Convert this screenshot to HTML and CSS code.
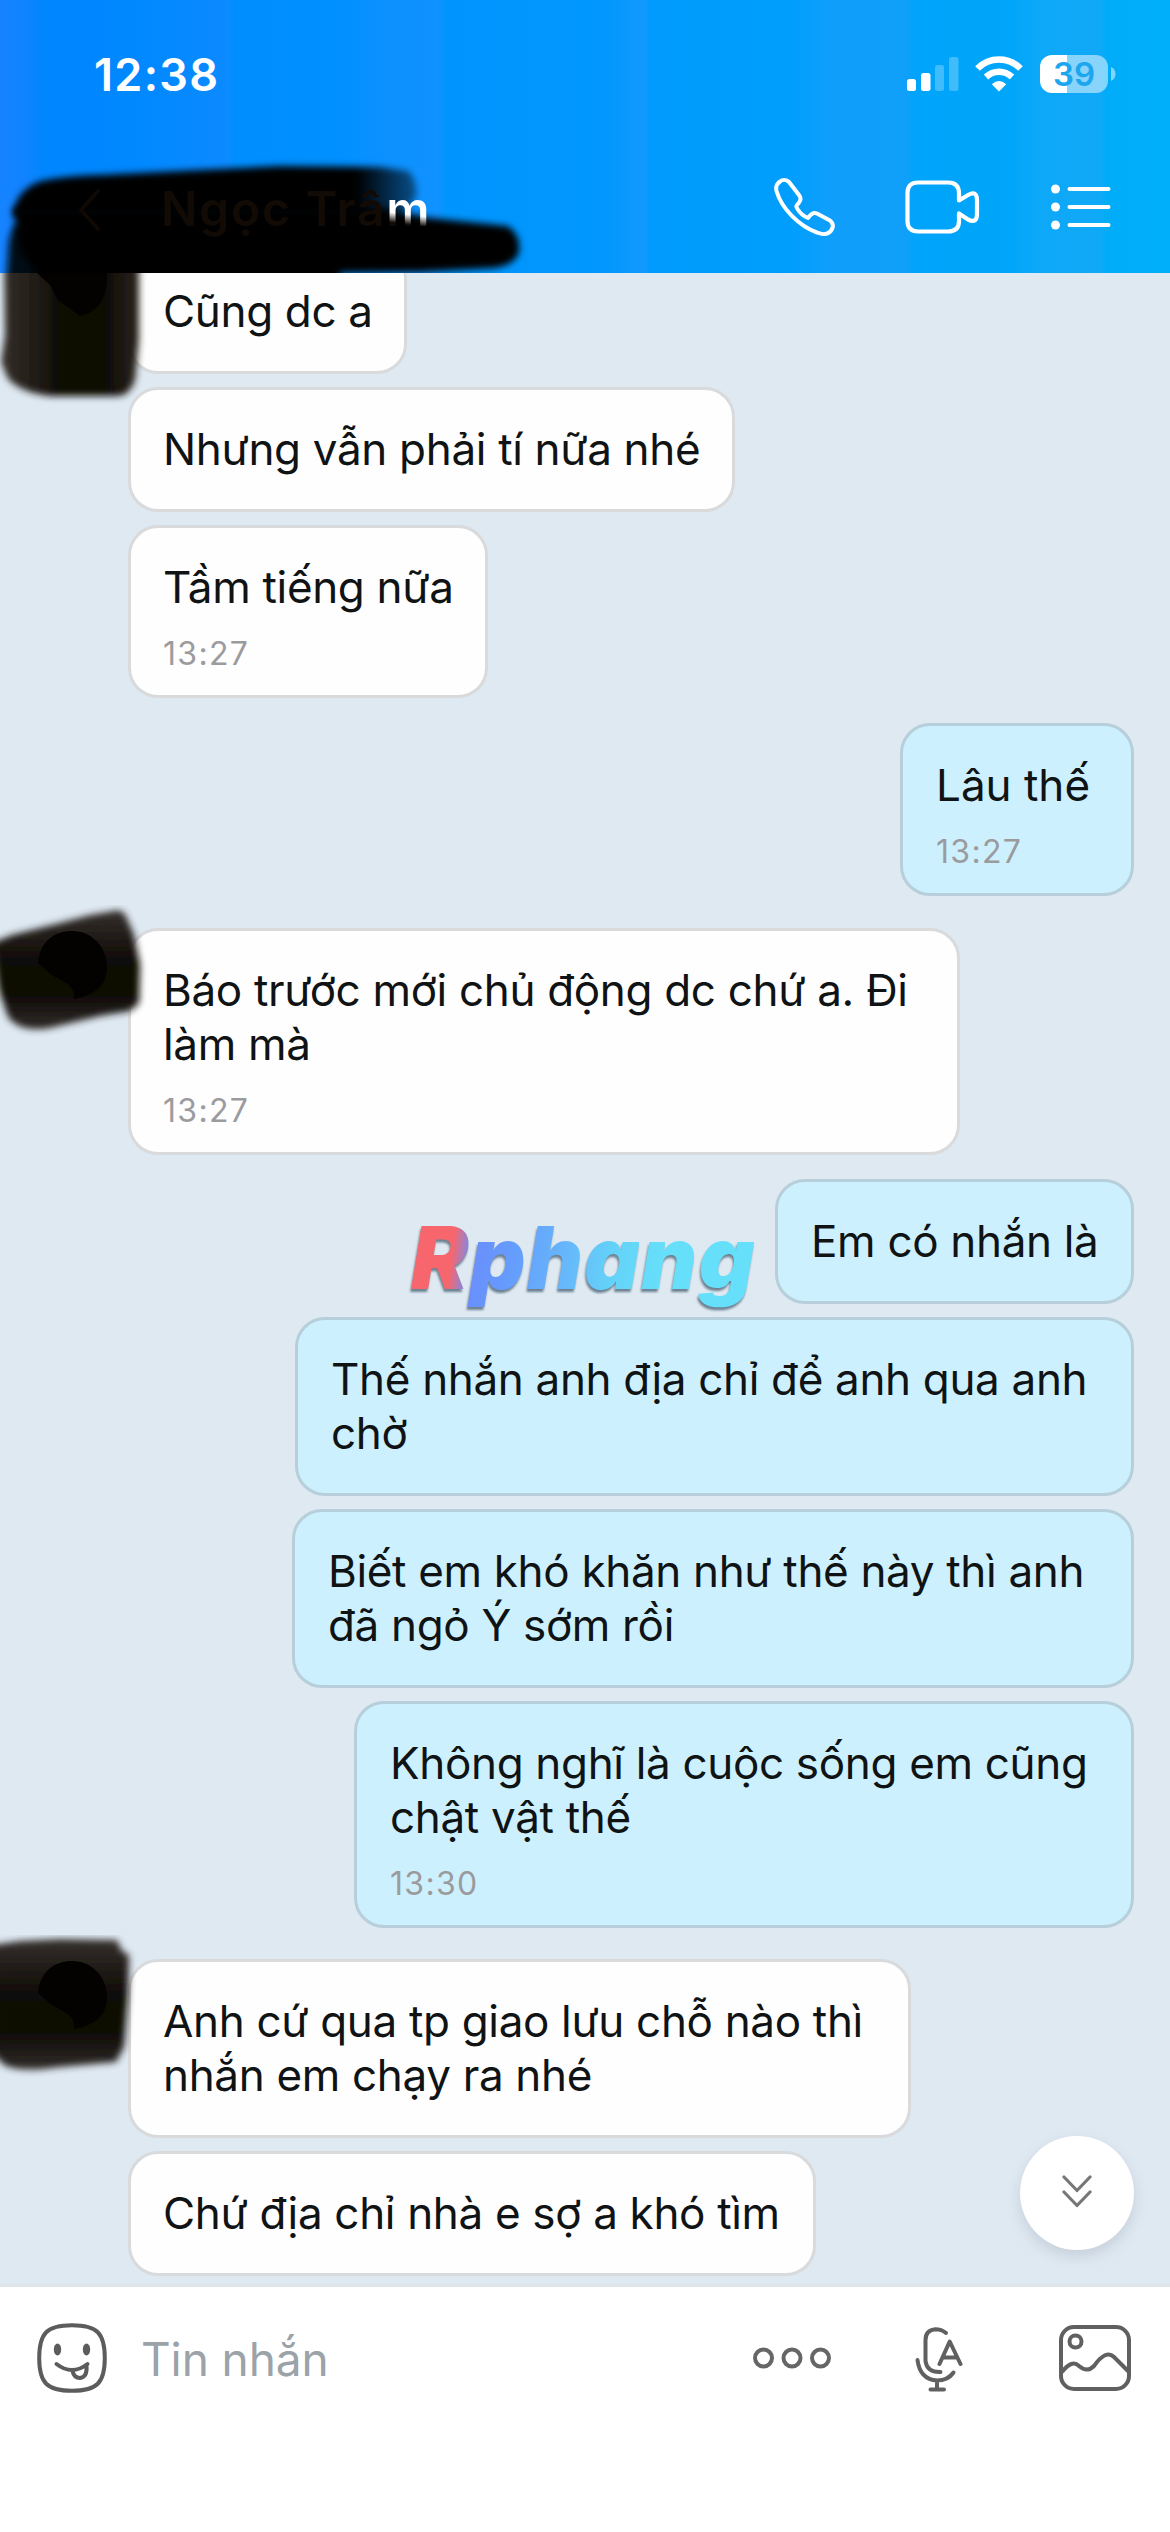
FILE: index.html
```
<!DOCTYPE html>
<html lang="vi">
<head>
<meta charset="utf-8">
<title>Tin nhắn</title>
<link rel="stylesheet" href="styles.css">
</head>
<body>
<div class="screen">
  <header class="header">
    <div class="status">
      <span class="clock">12:38</span>
      <div class="status-icons">
        <svg width="52" height="38" viewBox="0 0 52 38" fill="#fff">
          <rect x="0" y="24" width="9" height="12" rx="2.5"/>
          <rect x="14" y="18" width="9.500" height="18" rx="2.500"/>
          <rect x="28" y="10" width="9" height="26" rx="2.500" opacity=".25"/>
          <rect x="42" y="2" width="9.500" height="34" rx="2.500" opacity=".25"/>
        </svg>
        <svg class="wifi" width="48" height="38" viewBox="0 0 48 38">
          <path fill="none" stroke="#fff" stroke-width="6.500" d="M2.500 13.500C14.500 1.500 33.500 1.500 45.500 13.500M11 22C18.500 15 29.500 15 37 22"/>
          <path fill="#fff" d="M24 36.500L16.800 29.200Q24 23 31.200 29.200Z"/>
        </svg>
        <div class="battery"><span>39</span></div>
        <svg class="nub" width="5" height="14" viewBox="0 0 5 14"><path fill="#fff" opacity=".5" d="M0 0Q4.500 2 4.500 7T0 14Z"/></svg>
      </div>
    </div>
    <div class="nav">
      <svg class="back" width="24" height="44" viewBox="0 0 24 44" fill="none" stroke="#100903" stroke-width="4" stroke-linecap="round" stroke-linejoin="round"><path d="M21 3L4 22L21 41"/></svg>
      <h1 class="title">Ngọc Trâm</h1>
      <svg class="phone" width="62" height="60" viewBox="0 0 62 60" fill="none" stroke="#fff" stroke-width="4" stroke-linejoin="round">
        <path d="M7 4.500C9.500 2.500 13.500 2.500 16 5L26 18C28 20.500 28 23 26 25.500C23 29.500 22.500 28.500 24.500 32C27 36 31 39.500 35 41C38 37 40 35 44 36.500L57 43.500C60 46 60.500 49 59 52C56.500 57 51 58.500 44 55.500C26 49 8.500 31.500 3.500 14C2.500 9.500 4 6.500 7 4.500Z"/>
      </svg>
      <svg class="video" width="75" height="54" viewBox="0 0 75 54" fill="none" stroke="#fff" stroke-width="4.200" stroke-linejoin="round">
        <path d="M13 2.500H43Q54 2.500 54 13.500V20.500L63 15Q72 10 72 20V34Q72 44 63 39.500L54 33.500V41Q54 51.500 43 51.500H13Q2.500 51.500 2.500 41V13Q2.500 2.500 13 2.500Z"/>
      </svg>
      <svg class="list" width="60" height="46" viewBox="0 0 60 46" fill="#fff" stroke="#fff" stroke-width="4" stroke-linecap="round">
        <path d="M18.500 5H57.500M18.500 23H57.500M18.500 41H57.500"/>
        <g stroke="none"><circle cx="4.500" cy="5" r="4.500"/><circle cx="4.500" cy="23" r="4.500"/><circle cx="4.500" cy="41" r="4.500"/></g>
      </svg>
    </div>
  </header>

  <main class="chat">
    <section class="group in first">
      <p class="bubble cung">Cũng dc a</p>
      <p class="bubble nhung">Nhưng vẫn phải tí nữa nhé</p>
      <div class="bubble timed tam"><p>Tầm tiếng nữa</p><time>13:27</time></div>
    </section>
    <section class="group out second">
      <div class="bubble timed lau"><p>Lâu thế</p><time>13:27</time></div>
    </section>
    <section class="group in third">
      <svg class="smear" width="160" height="140" viewBox="0 0 160 140">
        <defs><filter id="soft"><feGaussianBlur stdDeviation="3.500"/></filter>
        <linearGradient id="ink" x1="0" y1="0" x2="0" y2="1"><stop offset="0" stop-color="#35302d"/><stop offset=".4" stop-color="#110c07"/><stop offset=".7" stop-color="#0d0804"/><stop offset="1" stop-color="#302c29"/></linearGradient></defs>
        <path filter="url(#soft)" fill="url(#ink)" d="M-8 38L12 30L60 18L90 10L119 5L125 9L134 30L140 60L139 98L130 106L100 111L50 123Q20 128 8 112L-1 85Z"/>
        <path fill="#030201" d="M38 58C40 36 55 26 72 26C92 26 107 42 107 62C107 82 92 91 74 94C76 80 62 76 52 70Q44 64 38 58Z"/>
      </svg>
      <div class="bubble timed bao"><p>Báo trước mới chủ động dc chứ a. Đi làm mà</p><time>13:27</time></div>
    </section>
    <section class="group out fourth">
      <p class="bubble em">Em có nhắn là</p>
      <p class="bubble the">Thế nhắn anh địa chỉ để anh qua anh chờ</p>
      <p class="bubble biet">Biết em khó khăn như thế này thì anh đã ngỏ Ý sớm rồi</p>
      <div class="bubble timed khong"><p>Không nghĩ là cuộc sống em cũng chật vật thế</p><time>13:30</time></div>
    </section>
    <section class="group in fifth">
      <svg class="smear low" width="160" height="150" viewBox="0 0 160 150">
        <path filter="url(#soft)" fill="url(#ink)" d="M-8 10L20 6L60 4L117 5L122 16L129 20L128 60L124 112L116 127L60 132Q20 138 4 130L-8 118Z"/>
        <path fill="#030201" d="M38 58C40 36 55 26 72 26C92 26 107 42 107 62C107 82 92 91 74 94C76 80 62 76 52 70Q44 64 38 58Z"/>
      </svg>
      <p class="bubble anh">Anh cứ qua tp giao lưu chỗ nào thì nhắn em chạy ra nhé</p>
      <p class="bubble chu">Chứ địa chỉ nhà e sợ a khó tìm</p>
    </section>
    <div class="watermark">Rphang</div>
    <button class="scroll" aria-label="Xuống cuối">
      <svg width="30" height="34" viewBox="0 0 30 34" fill="none" stroke="#777" stroke-width="3.200" stroke-linecap="round" stroke-linejoin="round"><path d="M2 2L15 15.500L28 2M2 17L15 30.500L28 17"/></svg>
    </button>
  </main>

  <svg class="scribble" width="560" height="260" viewBox="0 150 560 260">
    <defs>
      <filter id="edge" x="-10%" y="-20%" width="120%" height="140%"><feGaussianBlur stdDeviation="3.500"/></filter>
      <linearGradient id="fade" x1="0" x2="1"><stop offset="0" stop-color="#000"/><stop offset=".85" stop-color="#000"/><stop offset="1" stop-color="#000" stop-opacity=".45"/></linearGradient>
      <linearGradient id="column" x1="0" x2="1"><stop offset="0" stop-color="#332e29"/><stop offset=".33" stop-color="#1b1610"/><stop offset=".42" stop-color="#0b0804"/><stop offset=".75" stop-color="#0d0a06"/><stop offset="1" stop-color="#2a241c"/></linearGradient>
      <clipPath id="above"><rect x="0" y="150" width="560" height="123"/></clipPath>
      <clipPath id="below"><rect x="0" y="273" width="560" height="140"/></clipPath>
    </defs>
    <g clip-path="url(#above)">
      <path filter="url(#edge)" fill="#000814" d="M9 240L14 225L50 225V290H6Z"/>
      <path filter="url(#edge)" fill="url(#fade)" d="M13 215Q15 192 38 182Q60 176 100 175L200 170L280 166L380 167L408 171Q418 180 416 198L400 216H13Z"/>
      <path filter="url(#edge)" fill="#000" d="M13 208H385L430 218L507 226Q521 234 519 252Q515 265 494 268L420 272L340 273V290H45L20 250Z"/>
    </g>
    <g clip-path="url(#below)">
      <path filter="url(#edge)" fill="url(#column)" d="M4 255H139V340L135 380Q130 395 118 396L50 396Q22 393 8 379L1 362L5 335Z"/>
      <path fill="#030201" d="M37 273L50 285L58 300L80 316Q106 310 107 280V273Z"/>
    </g>
  </svg>

  <footer class="composer">
    <svg class="emoji" width="70" height="70" viewBox="0 0 70 70" fill="none" stroke="#5c5c5c" stroke-width="4" stroke-linecap="round">
      <path d="M35 2.200C60 2.200 67.800 10 67.800 35S60 67.800 35 67.800S2.200 60 2.200 35S10 2.200 35 2.200Z"/>
      <path d="M19.500 41Q35 53 50.500 41M35.500 48Q37 55 43 55Q50.500 54 49.500 43"/>
      <g fill="#5c5c5c" stroke="none"><ellipse cx="20.500" cy="26.500" rx="3.700" ry="6"/><ellipse cx="49.500" cy="26.500" rx="3.700" ry="6"/></g>
    </svg>
    <span class="placeholder">Tin nhắn</span>
    <svg class="more" width="80" height="22" viewBox="0 0 80 22" fill="none" stroke="#666" stroke-width="4"><circle cx="11.500" cy="11" r="8.500"/><circle cx="40" cy="11" r="8.500"/><circle cx="68.500" cy="11" r="8.500"/></svg>
    <svg class="mic" width="48" height="66" viewBox="0 0 48 66" fill="none" stroke="#606060" stroke-width="4" stroke-linecap="round" stroke-linejoin="round">
      <path d="M31 6Q26.500 2.200 20.500 2.200Q10.500 3 10.500 13V34Q12 45.500 25.500 45M2.500 33Q5 52.500 22 53.500Q33 53.500 38.500 45.500M22 54V62.500M15.500 62.500H29"/>
      <path d="M24.500 37L34.700 14.500L45.500 37M28.500 30.500H42"/>
    </svg>
    <svg class="image" width="72" height="66" viewBox="0 0 72 66" fill="none" stroke="#606060" stroke-width="4">
      <rect x="2" y="2" width="68" height="62" rx="13"/><circle cx="16.500" cy="16.500" r="6"/>
      <path d="M3 47Q13 34 20 41Q28 48 35 41Q47 24 55 32L70 47"/>
    </svg>
  </footer>
</div>
</body>
</html>
```
FILE: styles.css
```
* { box-sizing: border-box; margin: 0; padding: 0; }
body { width: 1170px; background: #fff; font-family: Inter, "Noto Sans", sans-serif; color: #101314; }
svg { display: block; flex: none; }
.screen { position: relative; width: 1170px; height: 2532px; display: flex; flex-direction: column; overflow: hidden; }

.header {
  height: 273px; flex: none; display: flex; flex-direction: column;
  background: linear-gradient(90deg, #1683ff 0, #1083ff 26px, #0086ff 44px, #0088ff 130px, #0a8aff 215px, #0c8bff 228px, #008eff 234px, #0090ff 340px, #0b91ff 380px, #1092ff 438px, #0095fe 446px, #0097fe 600px, #1299fd 645px, #009bfd 650px, #009efc 790px, #0f9ffb 830px, #10a0fa 906px, #00a4fa 916px, #00a6fa 1010px, #0ea8f8 1040px, #10a9f7 1100px, #00acf8 1106px, #00aff9 1170px);
}
.status { height: 148px; display: flex; align-items: flex-start; justify-content: space-between; padding: 0 54px 0 94px; }
.clock { font-size: 45px; font-weight: 600; line-height: 54px; letter-spacing: 1.3px; color: #fff; margin-top: 48px; }
.status-icons { display: flex; align-items: flex-start; margin-top: 55px; }
.wifi { margin-left: 16px; }
.battery {
  width: 68px; height: 38px; margin-left: 17px; border-radius: 12px; text-align: center;
  background: linear-gradient(90deg, #fff 27px, rgba(255,255,255,.5) 27px);
  color: #1ba6ef; font-size: 33px; font-weight: 600; line-height: 39px;
}
.nub { margin: 12px 0 0 3px; }
.nav { height: 125px; display: flex; align-items: flex-start; padding-left: 77px; }
.back { margin-top: 40px; position: relative; z-index: 4; }
/* Dark lettering over the scribble; only the last letter keeps its white upper half. */
.title {
  width: 600px; margin: 32px 0 0 60px; position: relative; z-index: 4;
  font-size: 48px; font-weight: 600; line-height: 58px; letter-spacing: 1.8px;
  color: transparent; -webkit-background-clip: text; background-clip: text;
  background-color: #120a04;
  background-image: linear-gradient(187deg, #fff 58%, rgba(255,255,255,0) 74%);
  background-size: 46px 58px; background-position: 222px 0; background-repeat: no-repeat;
}
.phone { margin: 29px 0 0 12px; }
.video { margin: 32px 0 0 70px; }
.list { margin: 36px 0 0 71px; }

.scribble { position: absolute; left: 0; top: 150px; z-index: 3; pointer-events: none; }

.chat { position: relative; height: 2014px; flex: none; background: #dfe9f2; border-bottom: 3px solid #e0e5ea; overflow: hidden; }
.group { position: relative; display: flex; flex-direction: column; gap: 13px; }
.group.in { padding-left: 128px; align-items: flex-start; }
.group.out { padding-right: 36px; align-items: flex-end; }
.first { margin-top: -24px; }
.second { margin-top: 25px; }
.third { margin-top: 32px; }
.fourth { margin-top: 24px; }
.fifth { margin-top: 31px; }

.bubble {
  position: relative; padding: 32px 20px 33px 32px; border: 3px solid #d8dadc; border-radius: 30px;
  background: #fefefe; font-size: 44px; line-height: 54px; letter-spacing: -.33px;
}
.out .bubble { background: #cdf0fe; border-color: #b6cfda; padding-left: 33px; }
.timed, .out .timed { padding-bottom: 21px; }
.bubble time { display: block; margin-top: 20px; font-size: 32px; line-height: 40px; letter-spacing: 1.3px; color: #9b9b9d; }
.cung { width: 279px; }
.nhung { width: 607px; }
.tam { width: 360px; }
.lau { width: 234px; letter-spacing: 0; }
.bao { width: 832px; }
.em { width: 359px; }
.the { width: 839px; }
.biet { width: 842px; }
.khong { width: 780px; }
.anh { width: 783px; }
.chu { width: 688px; }

.smear { position: absolute; left: 0; top: -23px; z-index: 2; }
.smear.low { top: -24px; }

.watermark {
  position: absolute; left: 407px; top: 935px; padding: 0 12px 12px 4px;
  font-size: 86px; line-height: 100px; font-weight: 900; font-style: italic; letter-spacing: 1.5px;
  color: transparent; -webkit-background-clip: text; background-clip: text;
  background-image: linear-gradient(97deg, #f7666c 0, #f7666c 50px, #6a8efb 70px, #659cfd 110px, #66b8fb 165px, #64d2f8 210px, #66dffa 260px);
  filter: drop-shadow(-1px 3px 1px rgba(60,85,105,.7));
}
.scroll {
  position: absolute; left: 1020px; top: 1863px; width: 114px; height: 114px; border: 0; border-radius: 50%;
  display: flex; align-items: center; justify-content: center; padding-bottom: 2px;
  background: #fff; box-shadow: 0 6px 14px rgba(110,120,135,.22);
}

.composer { flex: 1; display: flex; align-items: flex-start; padding-left: 37px; background: #fff; }
.emoji { margin-top: 36px; }
.placeholder { width: 608px; margin: 44px 0 0 34px; font-size: 46px; line-height: 56px; letter-spacing: -.1px; color: #9ba3a9; }
.more { margin: 60px 0 0 3px; }
.mic { margin: 40px 0 0 83px; }
.image { margin: 38px 0 0 96px; }
```
